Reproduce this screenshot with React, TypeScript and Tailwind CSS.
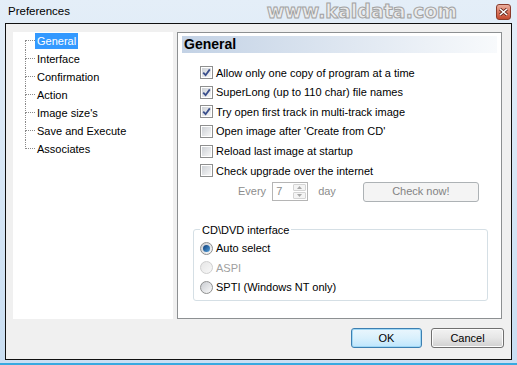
import clsx from "clsx";

const treeItems = [
  "General",
  "Interface",
  "Confirmation",
  "Action",
  "Image size's",
  "Save and Execute",
  "Associates",
];

const options = [
  { label: "Allow only one copy of program at a time", checked: true },
  { label: "SuperLong (up to 110 char) file names", checked: true },
  { label: "Try open first track in multi-track image", checked: true },
  { label: "Open image after 'Create from CD'", checked: false },
  { label: "Reload last image at startup", checked: false },
  { label: "Check upgrade over the internet", checked: false },
];

function CheckBox({ checked }: { checked?: boolean }) {
  return (
    <span className="w-[13px] h-[13px] shrink-0 border border-[#8e8f8f] bg-white p-[1px] flex">
      <span className="flex-1 flex items-center justify-center bg-gradient-to-br from-[#cdd1d6] to-[#f7f7f7]">
        {checked && (
          <svg width="9" height="9" viewBox="0 0 9 9">
            <path d="M1.2 4.6 L3.6 7.2 L7.8 1.4" fill="none" stroke="#3a4f8c" strokeWidth="1.8" />
          </svg>
        )}
      </span>
    </span>
  );
}

function Radio({ selected, disabled }: { selected?: boolean; disabled?: boolean }) {
  return (
    <span
      className={clsx(
        "w-[13px] h-[13px] shrink-0 rounded-full border flex items-center justify-center",
        disabled
          ? "border-[#cfcfcf] bg-gradient-to-br from-[#e6e6e6] to-[#f8f8f8]"
          : "border-[#8e8f8f] bg-gradient-to-br from-[#c9ccd1] to-[#fafafa]"
      )}
    >
      {selected && (
        <span className="w-[7px] h-[7px] rounded-full bg-gradient-to-br from-[#0c3d78] to-[#55a2dd]" />
      )}
    </span>
  );
}

export default function App() {
  return (
    <div className="w-[517px] h-[365px] flex flex-col bg-gradient-to-b from-[#e4eef8] to-[#c9def2] font-['Liberation_Sans',Arial,sans-serif] text-[11px] text-black overflow-hidden">
      {/* title bar */}
      <div className="h-[23px] shrink-0 flex items-center pl-[8px] pr-[6px]">
        <span className="text-[11.5px]">Preferences</span>
        <span className="ml-auto mr-[39px] font-['DejaVu_Sans',sans-serif] font-bold text-[19px] leading-none text-[#ececec] [-webkit-text-stroke:1px_#a2a2a2]">
          www.kaldata.com
        </span>
        <span className="w-[15px] h-[16px] rounded-[3px] border border-[#8a3b2b] bg-gradient-to-b from-[#eab0a0] via-[#d9765f] to-[#c4492f] flex items-center justify-center">
          <svg width="9" height="8" viewBox="0 0 9 8">
            <path d="M1 1 L8 7 M8 1 L1 7" stroke="#5a2018" strokeWidth="3" />
            <path d="M1 1 L8 7 M8 1 L1 7" stroke="#fff" strokeWidth="1.6" />
          </svg>
        </span>
      </div>

      {/* client area */}
      <div className="mx-[5px] h-[337px] border border-[#101010] bg-[#f0f0f0] flex flex-col pt-[8px] pl-[7px] pr-[8px] pb-[10px]">
        <div className="flex gap-[4px] h-[287px]">
          {/* tree */}
          <div className="w-[160px] bg-white pl-[12px]">
            {treeItems.map((t, i) => (
              <div key={t} className="h-[18px] flex">
                <div className="w-[10px] flex flex-col">
                  <div
                    className={clsx(
                      "h-[9px] border-dotted border-[#8a8a8a] border-b",
                      i > 0 && "border-l"
                    )}
                  />
                  <div
                    className={clsx(
                      "flex-1 border-dotted border-[#8a8a8a]",
                      i < treeItems.length - 1 && "border-l"
                    )}
                  />
                </div>
                <span
                  className={clsx(
                    "self-center h-[16px] leading-[16px] px-[2px] text-[11px]",
                    i === 0 && "bg-[#3399ff] text-white"
                  )}
                >
                  {t}
                </span>
              </div>
            ))}
          </div>

          {/* settings page */}
          <div className="w-[325px] border border-[#8d9092] bg-white pt-[3px]">
            <div className="mx-[4px] h-[17px] bg-gradient-to-r from-[#c3d2e5] to-[#f8fafc] flex items-center pl-[2px]">
              <span className="font-bold text-[14px]">General</span>
            </div>

            <div className="mt-[10px] pl-[22px]">
              {options.map((o) => (
                <div key={o.label} className="h-[19.6px] flex items-center gap-[3px]">
                  <CheckBox checked={o.checked} />
                  <span>{o.label}</span>
                </div>
              ))}
            </div>

            <div className="mt-[1px] h-[20px] flex items-center pl-[60px] text-[#8d8d8d]">
              <span>Every</span>
              <span className="ml-[6px] w-[36px] h-[19px] border border-[#b5b5b5] bg-white flex">
                <span className="flex-1 pl-[3px] leading-[17px]">7</span>
                <span className="w-[15px] flex flex-col gap-[1px] p-[1px]">
                  <span className="flex-1 border border-[#d4d4d4] rounded-[1px] bg-[#f4f4f4] flex items-center justify-center">
                    <svg width="5" height="3" viewBox="0 0 5 3">
                      <path d="M0 3 L2.5 0 L5 3 Z" fill="#a8a8a8" />
                    </svg>
                  </span>
                  <span className="flex-1 border border-[#d4d4d4] rounded-[1px] bg-[#f4f4f4] flex items-center justify-center">
                    <svg width="5" height="3" viewBox="0 0 5 3">
                      <path d="M0 0 L2.5 3 L5 0 Z" fill="#a8a8a8" />
                    </svg>
                  </span>
                </span>
              </span>
              <span className="ml-[10px]">day</span>
              <span className="ml-[27px] w-[116px] h-[20px] rounded-[3px] border border-[#adb2b5] bg-[#f4f4f4] flex items-center justify-center text-[#838383]">
                Check now!
              </span>
            </div>

            <fieldset className="mt-[21px] ml-[15px] w-[295px] border border-[#d5dfe5] rounded-[3px] px-[6px] pb-[3px]">
              <legend className="px-[2px] leading-[14px]">CD\DVD interface</legend>
              <div className="mt-[2px]">
                <div className="h-[19.6px] flex items-center gap-[3px]">
                  <Radio selected />
                  <span>Auto select</span>
                </div>
                <div className="h-[19.6px] flex items-center gap-[3px]">
                  <Radio disabled />
                  <span className="text-[#a0a0a0]">ASPI</span>
                </div>
                <div className="h-[19.6px] flex items-center gap-[3px]">
                  <Radio />
                  <span>SPTI (Windows NT only)</span>
                </div>
              </div>
            </fieldset>
          </div>
        </div>

        {/* buttons */}
        <div className="mt-[9px] flex justify-end gap-[9px] -mr-[1px]">
          <button className="w-[71px] h-[20px] rounded-[3px] border border-[#3c7fb1] bg-gradient-to-b from-[#eaf6fd] via-[#d9f0fc] to-[#bee6fd] text-[11px] shadow-[inset_0_0_0_1px_#9fd7f5]">
            OK
          </button>
          <button className="w-[73px] h-[20px] rounded-[3px] border border-[#707070] bg-gradient-to-b from-[#f2f2f2] via-[#e6e6e6] to-[#d0d0d0] text-[11px] shadow-[inset_0_0_0_1px_#fcfcfc]">
            Cancel
          </button>
        </div>
      </div>
      <div className="flex-1 border-b-[2px] border-[#37a9e0]" />
    </div>
  );
}
